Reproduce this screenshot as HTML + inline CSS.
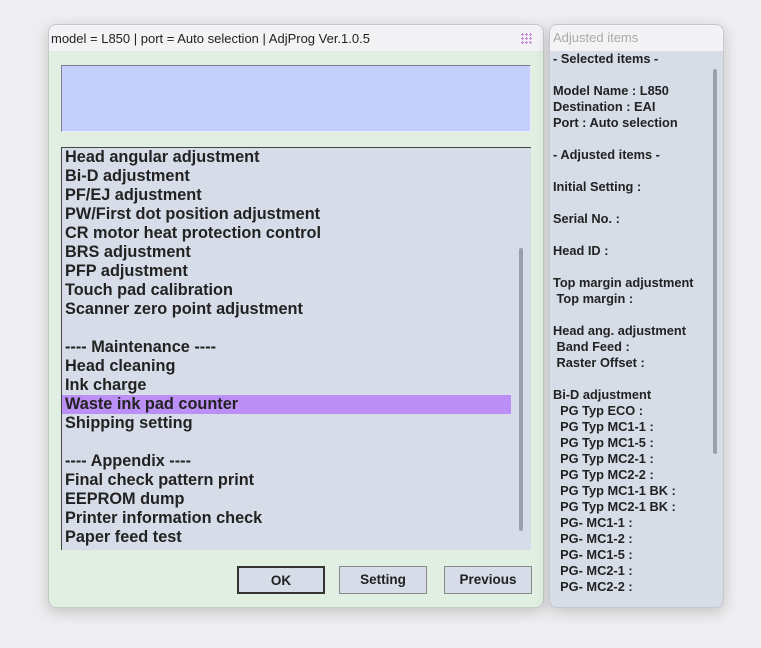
<!DOCTYPE html>
<html><head><meta charset="utf-8"><style>
*{margin:0;padding:0;box-sizing:border-box}
body{width:761px;height:648px;background:#eeeef0;position:relative;overflow:hidden;font-family:"Liberation Sans",Arial,sans-serif}
.win{position:absolute;border-radius:8px;overflow:hidden;box-shadow:0 4px 14px rgba(0,0,0,0.18);border:1px solid #c8c8cc}
#main{left:48px;top:24px;width:496px;height:584px;background:#e1efe2}
#main .tb{height:26px;background:#f3f3f6;font-size:13px;color:#222;padding:6px 0 0 2px}
#blue{position:absolute;left:12px;top:40px;width:470px;height:67px;background:#c5cffb;border:1px solid #7a8090;border-right-color:#e8eef8;border-bottom-color:#e8eef8}
#list{position:absolute;left:12px;top:122px;width:470px;height:403px;background:#d7dde8;border-left:1px solid #444;border-top:1px solid #444}
#list div{height:19px;line-height:19px;font-size:16.3px;font-weight:bold;color:#222;padding-left:3px;white-space:nowrap}
#list .sel{background:#bb8ff5;width:449px}
.sb{position:absolute;background:#9aa0ac;border-radius:2px}
.btn{position:absolute;top:541px;width:88px;height:28px;background:#d6dde9;border:1px solid #888;font-size:13.5px;font-weight:bold;color:#222;text-align:center;line-height:26px}
#side{left:549px;top:24px;width:175px;height:584px;background:#d6dde7}
#side .tb{height:26px;background:#f3f3f6;font-size:13px;color:#aaa;padding:5px 0 0 3px}
#side .c{padding:0 0 0 3px;font-size:12.8px;font-weight:bold;color:#222;line-height:16px;white-space:pre}
</style></head><body>
<div class="win" id="main">
<div class="tb">model = L850 | port = Auto selection | AdjProg Ver.1.0.5</div>
<svg style="position:absolute;left:472px;top:8px" width="12" height="12" viewBox="0 0 12 12" fill="#c58ad8"><g id="r"><rect x="0" y="1" width="3" height="1"/><rect x="1" y="0" width="1" height="3"/><rect x="4" y="1" width="3" height="1"/><rect x="5" y="0" width="1" height="3"/><rect x="8" y="1" width="3" height="1"/><rect x="9" y="0" width="1" height="3"/></g><use href="#r" y="4"/><use href="#r" y="8"/></svg>
<div id="blue"></div>
<div id="list">
<div>Head angular adjustment</div>
<div>Bi-D adjustment</div>
<div>PF/EJ adjustment</div>
<div>PW/First dot position adjustment</div>
<div>CR motor heat protection control</div>
<div>BRS adjustment</div>
<div>PFP adjustment</div>
<div>Touch pad calibration</div>
<div>Scanner zero point adjustment</div>
<div></div>
<div>---- Maintenance ----</div>
<div>Head cleaning</div>
<div>Ink charge</div>
<div class="sel">Waste ink pad counter</div>
<div>Shipping setting</div>
<div></div>
<div>---- Appendix ----</div>
<div>Final check pattern print</div>
<div>EEPROM dump</div>
<div>Printer information check</div>
<div>Paper feed test</div>
</div>
<div class="sb" style="left:470px;top:223px;width:4px;height:283px"></div>
<div class="btn" style="left:188px;border:2px solid #333">OK</div>
<div class="btn" style="left:290px">Setting</div>
<div class="btn" style="left:395px">Previous</div>
</div>
<div class="win" id="side">
<div class="tb">Adjusted items</div>
<div class="c">- Selected items -

Model Name : L850
Destination : EAI
Port : Auto selection

- Adjusted items -

Initial Setting :

Serial No. :

Head ID :

Top margin adjustment
 Top margin :

Head ang. adjustment
 Band Feed :
 Raster Offset :

Bi-D adjustment
  PG Typ ECO :
  PG Typ MC1-1 :
  PG Typ MC1-5 :
  PG Typ MC2-1 :
  PG Typ MC2-2 :
  PG Typ MC1-1 BK :
  PG Typ MC2-1 BK :
  PG- MC1-1 :
  PG- MC1-2 :
  PG- MC1-5 :
  PG- MC2-1 :
  PG- MC2-2 :</div>
<div class="sb" style="left:163px;top:44px;width:4px;height:385px"></div>
</div>
</body></html>
